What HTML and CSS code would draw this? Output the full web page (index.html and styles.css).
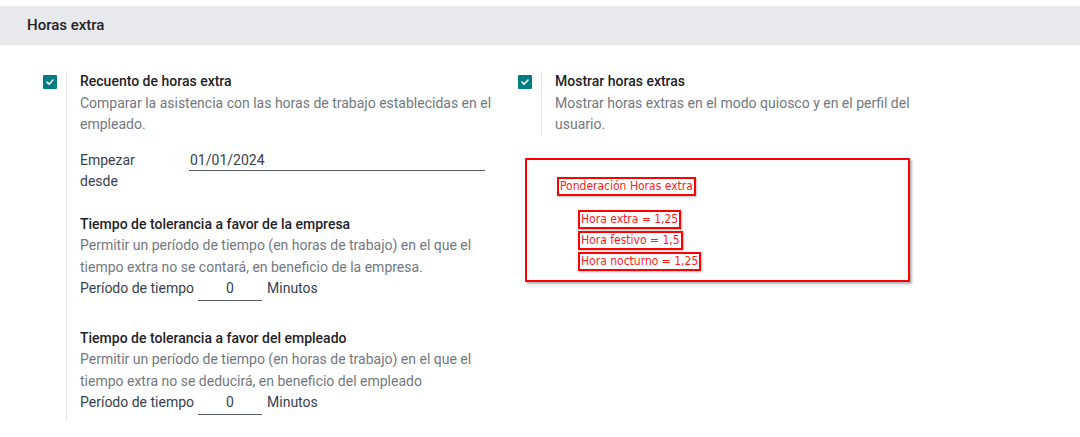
FILE: index.html
```html
<!DOCTYPE html>
<html lang="es">
<head>
<meta charset="utf-8">
<link rel="stylesheet" href="styles.css">
</head>
<body>
<div class="section-head">Horas extra</div>
<div class="settings">
  <div class="col">
    <div class="setting">
      <div class="cb-wrap"><span class="cb"><svg viewBox="0 0 14 14" width="14" height="14"><path d="M4 7.2 L6.1 9.2 L10 5" fill="none" stroke="#fff" stroke-width="1.6" stroke-linecap="round" stroke-linejoin="round"/></svg></span></div>
      <div class="pane pane-long">
        <div class="title">Recuento de horas extra</div>
        <div class="desc">Comparar la asistencia con las horas de trabajo establecidas en el empleado.</div>
        <div class="field-row">
          <div class="flabel">Empezar<br>desde</div>
          <div class="input date">01/01/2024</div>
        </div>
        <div class="title sub1">Tiempo de tolerancia a favor de la empresa</div>
        <div class="desc">Permitir un período de tiempo (en horas de trabajo) en el que el tiempo extra no se contará, en beneficio de la empresa.</div>
        <div class="period"><span>Período de tiempo</span><span class="input num">0</span><span>Minutos</span></div>
        <div class="title sub2">Tiempo de tolerancia a favor del empleado</div>
        <div class="desc">Permitir un período de tiempo (en horas de trabajo) en el que el tiempo extra no se deducirá, en beneficio del empleado</div>
        <div class="period"><span>Período de tiempo</span><span class="input num">0</span><span>Minutos</span></div>
      </div>
    </div>
  </div>
  <div class="col">
    <div class="setting">
      <div class="cb-wrap"><span class="cb"><svg viewBox="0 0 14 14" width="14" height="14"><path d="M4 7.2 L6.1 9.2 L10 5" fill="none" stroke="#fff" stroke-width="1.6" stroke-linecap="round" stroke-linejoin="round"/></svg></span></div>
      <div class="pane pane-short">
        <div class="title">Mostrar horas extras</div>
        <div class="desc">Mostrar horas extras en el modo quiosco y en el perfil del usuario.</div>
      </div>
    </div>
    <div class="note">
      <div class="tag">Ponderación Horas extra</div>
      <div class="rates">
        <div class="tag">Hora extra = 1,25</div>
        <div class="tag">Hora festivo = 1,5</div>
        <div class="tag">Hora nocturno = 1,25</div>
      </div>
    </div>
  </div>
</div>
</body>
</html>
```
FILE: styles.css
```css
html, body {
  margin: 0;
  padding: 0;
  background: #fff;
}
body {
  font-family: Roboto, "Liberation Sans", sans-serif;
  font-size: 14px;
  color: #374151;
}
.section-head {
  margin-top: 6px;
  height: 39px;
  line-height: 39px;
  background: #e8e9ec;
  padding-left: 27px;
  font-size: 15px;
  font-weight: 500;
  color: #1f2328;
}
.settings {
  display: grid;
  grid-template-columns: 475px 1fr;
  padding-left: 43px;
  padding-top: 26px;
}
.setting {
  display: flex;
  align-items: flex-start;
}
.cb-wrap {
  width: 23px;
  flex: none;
  padding-top: 4px;
}
.cb {
  display: block;
  width: 14px;
  height: 14px;
  border-radius: 1px;
  background: #017e84;
}
.cb svg { display: block; }
.pane {
  border-left: 1px solid #e4e6e9;
  padding-left: 13px;
  width: 412px;
  line-height: 21.5px;
}
.pane-long {
  padding-bottom: 6px;
}
.pane-short {
  width: 372px;
}
.title {
  font-weight: 500;
  color: #1f2328;
}
.desc {
  color: #727881;
}
.field-row {
  display: flex;
  margin-top: 14px;
}
.flabel {
  width: 109px;
  flex: none;
}
.input {
  border-bottom: 1px solid #555b66;
  height: 21.5px;
}
.date {
  width: 296px;
  flex: none;
  padding-left: 1px;
  box-sizing: border-box;
}
.sub1 { margin-top: 21px; }
.sub2 { margin-top: 27px; }
.period {
  display: flex;
  align-items: flex-start;
}
.num {
  width: 64px;
  margin-left: 4px;
  margin-right: 5px;
  text-align: center;
}
.note {
  margin-left: 7px;
  margin-top: 22px;
  border: 2px solid #ff0000;
  box-shadow: 2px 2px 2px rgba(0, 0, 0, 0.3);
  padding: 17px 0 0 30px;
  box-sizing: border-box;
  width: 385px;
  height: 124px;
}
.tag {
  display: inline-block;
  border: 2px solid #ff0000;
  box-shadow: 1px 1px 2px rgba(0, 0, 0, 0.25);
  color: #ff1a1a;
  font-family: "DejaVu Sans Condensed", "Liberation Sans", sans-serif;
  font-size: 12px;
  line-height: 15px;
  padding: 0 1px;
}
.rates {
  margin-top: 14px;
  margin-left: 21px;
  display: flex;
  flex-direction: column;
  align-items: flex-start;
  gap: 2px;
}
```
